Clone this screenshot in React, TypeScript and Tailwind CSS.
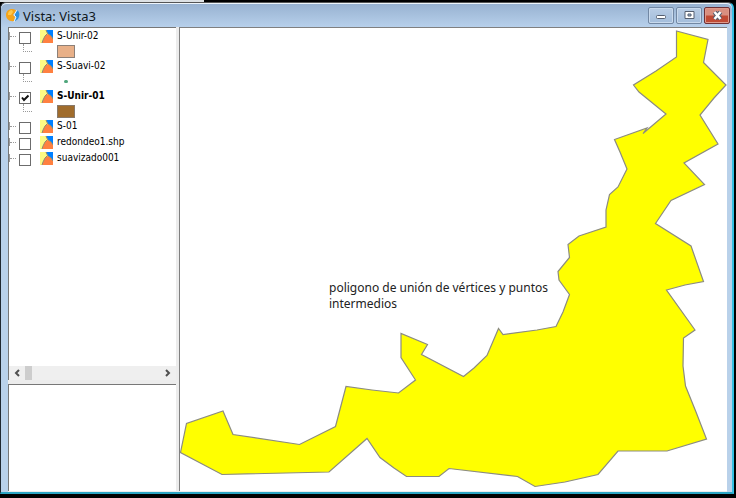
import { useState } from "react";

type Layer = {
  id: string;
  name: string;
  active?: boolean;
  symbol?: "peach" | "brown" | "point";
};

const layers: Layer[] = [
  { id: "unir02", name: "S-Unir-02", symbol: "peach" },
  { id: "suavi02", name: "S-Suavi-02", symbol: "point" },
  { id: "unir01", name: "S-Unir-01", symbol: "brown", active: true },
  { id: "s01", name: "S-01" },
  { id: "redondeo", name: "redondeo1.shp" },
  { id: "suavizado", name: "suavizado001" },
];

const outline =
  "676.5,31 708,39.5 703.5,62.5 726,85 714,98 700,115 718,144 684,163 704.5,184.5 671,200.5 655.5,223.5 691,246 703.5,281.5 685,285 666.5,290 695,330 683.5,338 683,366 685.5,386 696,412 706.5,439 667,451 618,451 598,474.5 565,482 535,486.5 517.5,476.5 449,468.5 439,476.5 406.5,476.5 394,468 380,457.5 367,438.5 329,472 222,474.5 180.5,452.5 186.5,423.5 223,411 233,434.5 299.5,444.5 335.5,426.5 346,386.5 372,390 398.5,393 415.5,380 401,357.5 401,333.5 427.5,344.5 421.5,354.5 463.5,376.5 474,368 487,355.5 498.5,328.5 503,334.5 537,330 556,326.5 563,312 569.5,294.5 559,280 558,271.5 569.5,257.5 568,244.5 579,236 606,227 606,210 609.5,194.5 618,187 627,169 620,152 614.5,139.5 647,128 643,133.5 666,114 639,92 633.5,85 656,71 676.5,57";

function AppIcon() {
  return (
    <svg viewBox="0 0 14 14" className="h-3.5 w-3.5 shrink-0" aria-hidden="true">
      <path d="M0 6C0 2 3 0 6 0C9 0 10 1 10 2L7 6L9 8L8 12C4 13 0 10 0 6Z" fill="#f5a41a" />
      <path d="M2 5C2 3 4 1 6 1L7 3L5 6H2Z" fill="#ffc94a" />
      <path d="M11 1C14 3 14 7 12 10L8 13L10 8L8 6Z" fill="#2f92e0" />
      <path d="M11 1L8 6L10 8L8 13" fill="none" stroke="#eaf5ff" />
    </svg>
  );
}

function LayerIcon() {
  return (
    <svg viewBox="0 0 13 13" className="h-[13px] w-[13px] shrink-0" aria-hidden="true">
      <path d="M0 0H13V13H0Z" fill="#fdfa83" />
      <path d="M6 0H13V9L11 6L8 4Z" fill="#0080ff" />
      <path d="M2 13L4 8L6 5L8 4L11 6L13 9V13Z" fill="#ff8040" />
      <path d="M6 0L7.500 3.500L5 6L3 10L2 13M7.500 3.500L11 6L13 9" fill="none" stroke="#8f8a70" />
    </svg>
  );
}

function LayerRow({ layer }: { layer: Layer }) {
  const [checked, setChecked] = useState(Boolean(layer.active));
  return (
    <li>
      <div className="flex h-4 items-center">
        <span className="h-2 w-px bg-[#999]" />
        <span className="w-1.5 border-t border-dotted border-[#999]" />
        <span className="ml-[3px] grid h-3 w-3 shrink-0 self-end">
          <input
            id={layer.id}
            type="checkbox"
            checked={checked}
            onChange={() => setChecked(!checked)}
            className="col-start-1 row-start-1 h-3 w-3 appearance-none border border-[#6c6c6c] bg-white"
          />
          {checked && (
            <svg viewBox="0 0 12 12" className="pointer-events-none col-start-1 row-start-1 h-3 w-3" aria-hidden="true">
              <path d="M3 5.500L5 8L9.500 3.500" fill="none" stroke="#111" strokeWidth="2" />
            </svg>
          )}
        </span>
        <label htmlFor={layer.id} className="flex items-center gap-1 pl-[9px] whitespace-nowrap">
          <LayerIcon />
          <span className={layer.active ? "font-bold" : ""}>{layer.name}</span>
        </label>
      </div>
      {layer.symbol && (
        <div className="flex h-3.5 items-start pl-3.5">
          <span className="h-2 w-[9px] border-b border-l border-dotted border-[#999]" />
          <span className="ml-[25px] flex h-3.5 w-[18px] items-center justify-center">
            {layer.symbol === "peach" && <span className="h-[13px] w-full border border-[#8c8078] bg-[#e8b088]" />}
            {layer.symbol === "brown" && <span className="h-[13px] w-full border border-[#88796a] bg-[#a06c2c]" />}
            {layer.symbol === "point" && <span className="h-[3px] w-1 rounded-full bg-[#4fa67c]" />}
          </span>
        </div>
      )}
    </li>
  );
}

const frameButton =
  "flex h-[17px] w-[26px] items-center justify-center rounded-xs border border-[#7288a4] bg-linear-to-b from-[#b9cde5] to-[#a3bddb] inset-ring inset-ring-[#c9daed]";

export default function App() {
  return (
    <div className="flex h-screen w-full flex-col bg-black pr-[2px] pb-1 font-['Noto_Sans',sans-serif] text-black">
      <div className="h-0.5 w-[204px] shrink-0 bg-[#dde1e4]" />
      <div className="flex min-h-0 flex-1 flex-col rounded-t-md border-t border-r-2 border-b-2 border-l border-t-[#555] border-r-[#35bfe3] border-b-[#2ba5c3] border-l-[#202830] bg-[#b9d1ea]">
        <header className="flex h-6 shrink-0 items-center rounded-t-md border-t border-[#eef5fc] bg-linear-to-b from-[#98b2d1] to-[#b7d0eb] pr-[2px] pl-[5px]">
          <AppIcon />
          <h1 className="ml-[3px] flex-1 text-[13px] leading-5 text-[#101820]">Vista: Vista3</h1>
          <div className="flex gap-[2px]">
            <button aria-label="Minimizar" className={frameButton}>
              <svg viewBox="0 0 12 8" className="h-2 w-3"><rect x="1.500" y="3.500" width="9" height="3" rx="1" fill="#fff" stroke="#555f70" /></svg>
            </button>
            <button aria-label="Maximizar" className={frameButton}>
              <svg viewBox="0 0 11 9" className="h-[9px] w-[11px]"><path d="M1 0.500H10V7.500H1Z" fill="#fff" stroke="#555f70" /><path d="M4 3H7V5H4Z" fill="#9fb6d2" stroke="#555f70" /></svg>
            </button>
            <button aria-label="Cerrar" className="flex h-[17px] w-[26px] items-center justify-center rounded-xs border border-[#6e3035] bg-linear-to-b from-[#d98f80] from-45% to-[#c04a34] to-55% inset-ring inset-ring-[#df9a8b]">
              <svg viewBox="0 0 11 9" className="h-[9px] w-[11px]"><path d="M2.500 1L8.500 8M8.500 1L2.500 8" stroke="#555f70" strokeWidth="4.500" /><path d="M2.500 1L8.500 8M8.500 1L2.500 8" stroke="#fff" strokeWidth="2.500" /></svg>
            </button>
          </div>
        </header>
        <main className="mr-[5px] ml-[7px] flex min-h-0 flex-1 bg-[#ececec] pb-px">
          <aside className="flex w-[168px] shrink-0 flex-col font-['DejaVu_Sans_Condensed','DejaVu_Sans',sans-serif] text-[10px] leading-4">
            <section aria-label="Capas" className="flex min-h-0 flex-1 flex-col border-t border-l border-[#777] bg-white">
              <ul className="min-h-0 flex-1 overflow-hidden">
                {layers.map((layer) => <LayerRow key={layer.id} layer={layer} />)}
              </ul>
              <div className="flex h-3.5 shrink-0 items-stretch bg-[#efefef]">
                <button aria-label="Desplazar a la izquierda" className="flex w-4 items-center justify-center">
                  <svg viewBox="0 0 6 8" className="h-2 w-1.5"><path d="M5 1L2 4L5 7" fill="none" stroke="#505050" strokeWidth="2" /></svg>
                </button>
                <span className="w-[7px] bg-[#cdcdcd]" />
                <span className="flex-1" />
                <button aria-label="Desplazar a la derecha" className="flex w-4 items-center justify-center">
                  <svg viewBox="0 0 6 8" className="h-2 w-1.5"><path d="M1 1L4 4L1 7" fill="none" stroke="#505050" strokeWidth="2" /></svg>
                </button>
              </div>
            </section>
            <section aria-label="Localizador" className="mt-1 h-[107px] shrink-0 border-t border-l border-[#777] bg-white" />
          </aside>
          <section aria-label="Mapa" className="relative ml-[3px] min-w-0 flex-1 border-t border-l border-[#808080] bg-white">
            <svg viewBox="180 28 547 463" className="h-full w-full" role="img" aria-label="S-Unir-01">
              <polygon points={outline} fill="#ffff00" stroke="#8c8c80" strokeWidth="1.2" />
            </svg>
            <p className="absolute top-[252px] left-[149px] w-56 text-[12px] leading-4 text-[#222]">
              poligono de unión de vértices y puntos intermedios
            </p>
          </section>
        </main>
      </div>
    </div>
  );
}
